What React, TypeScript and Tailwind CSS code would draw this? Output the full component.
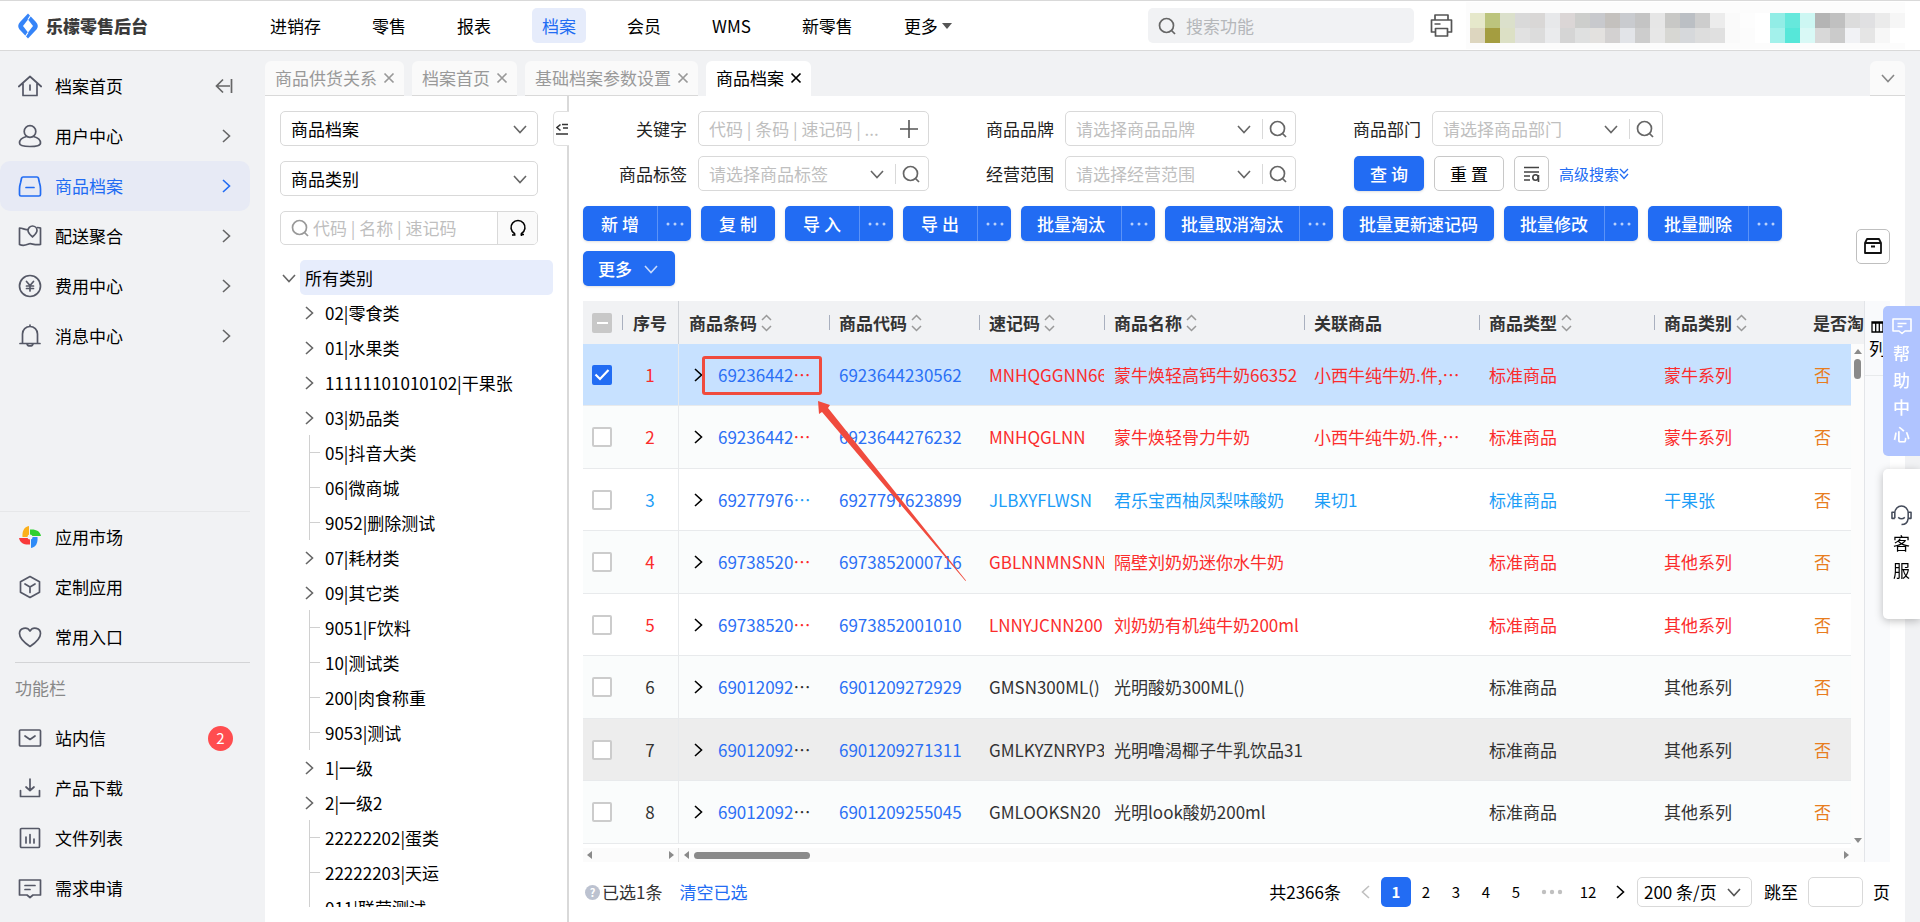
import { useState } from "react";
import type { ReactNode } from "react";

const navItems = ["进销存", "零售", "报表", "档案", "会员", "WMS", "新零售"];

const openTabs = ["商品供货关系", "档案首页", "基础档案参数设置", "商品档案"];

const treeItems = [
  { label: "02|零食类", leaf: false },
  { label: "01|水果类", leaf: false },
  { label: "11111101010102|干果张", leaf: false },
  { label: "03|奶品类", leaf: false },
  { label: "05|抖音大类", leaf: true },
  { label: "06|微商城", leaf: true },
  { label: "9052|删除测试", leaf: true },
  { label: "07|耗材类", leaf: false },
  { label: "09|其它类", leaf: false },
  { label: "9051|F饮料", leaf: true },
  { label: "10|测试类", leaf: true },
  { label: "200|肉食称重", leaf: true },
  { label: "9053|测试", leaf: true },
  { label: "1|一级", leaf: false },
  { label: "2|一级2", leaf: false },
  { label: "22222202|蛋类", leaf: true },
  { label: "22222203|天运", leaf: true },
  { label: "011|联营测试", leaf: true },
];

const toolbar = [
  { label: "新 增", more: true },
  { label: "复 制", more: false },
  { label: "导 入", more: true },
  { label: "导 出", more: true },
  { label: "批量淘汰", more: true },
  { label: "批量取消淘汰", more: true },
  { label: "批量更新速记码", more: false },
  { label: "批量修改", more: true },
  { label: "批量删除", more: true },
];

const columns = [
  { title: "商品条码", sort: true },
  { title: "商品代码", sort: true },
  { title: "速记码", sort: true },
  { title: "商品名称", sort: true },
  { title: "关联商品", sort: false },
  { title: "商品类型", sort: true },
  { title: "商品类别", sort: true },
  { title: "是否淘", sort: false },
];

const red = "text-[#fb2c2c]";
const sky = "text-[#1c9df7]";
const dark = "text-[#333333]";

const rows = [
  { code: "6923644230562", py: "MNHQGGNN66", name: "蒙牛焕轻高钙牛奶66352", link: "小西牛纯牛奶.件,…", cat: "蒙牛系列", color: red },
  { code: "6923644276232", py: "MNHQGLNN", name: "蒙牛焕轻骨力牛奶", link: "小西牛纯牛奶.件,…", cat: "蒙牛系列", color: red },
  { code: "6927797623899", py: "JLBXYFLWSN", name: "君乐宝西柚凤梨味酸奶", link: "果切1", cat: "干果张", color: sky },
  { code: "6973852000716", py: "GBLNNMNSNN", name: "隔壁刘奶奶迷你水牛奶", link: "", cat: "其他系列", color: red },
  { code: "6973852001010", py: "LNNYJCNN200", name: "刘奶奶有机纯牛奶200ml", link: "", cat: "其他系列", color: red },
  { code: "6901209272929", py: "GMSN300ML()", name: "光明酸奶300ML()", link: "", cat: "其他系列", color: dark },
  { code: "6901209271311", py: "GMLKYZNRYP3", name: "光明噜渴椰子牛乳饮品31", link: "", cat: "其他系列", color: dark },
  { code: "6901209255045", py: "GMLOOKSN20", name: "光明look酸奶200ml", link: "", cat: "其他系列", color: dark },
];

// user area is masked, one colour per block
const mask = [
  ["#e6e8cb", "#bcc47d", "#dbe0cb", "#d9d9d9", "#d9d7d6", "#e7e8ea", "#dbd6d6", "#cdcecc", "#c8c9cd", "#c4c1be", "#c9cbcf", "#c4c4c4", "#e6e6e6", "#c8c8c6", "#bbbfc4", "#cdcdcd", "#ececec", "#fafafa", "#fdfdfd", "#ffffff", "#92ede6", "#66e8dc", "#cdf7f3", "#b4b4b4", "#c0c0c0", "#dcdcdc", "#e0e0e2", "#ebebeb", "#f6f6f6"],
  ["#ddd6bf", "#a49d40", "#dce0c5", "#e1e1e1", "#dcdcdc", "#eaebed", "#d5d5d5", "#dfe0e0", "#e3e1df", "#d3d1d1", "#e2e4e8", "#cdcdcd", "#e7e7e7", "#d7d7d3", "#d6d8db", "#dddddd", "#e0e0e0", "#fafafa", "#fcfcfc", "#ffffff", "#a3f1eb", "#56e7d9", "#d9f9f6", "#d8d8d8", "#cbcbcb", "#f1f2f5", "#e5e5e5", "#f7f7f7", "#ffffff"],
];

const Chevron = ({ className = "" }: { className?: string }) => (
  <svg viewBox="0 0 14 14" className={`size-[14px] shrink-0 ${className}`} fill="none" stroke="currentColor" strokeWidth="1.6">
    <path d="M1 4l6 6.5L13 4" />
  </svg>
);

const Close = () => (
  <svg viewBox="0 0 12 12" className="size-3 shrink-0" fill="none" stroke="currentColor" strokeWidth="1.7">
    <path d="M1.5 1.5l9 9M10.5 1.5l-9 9" />
  </svg>
);

const Search = ({ className = "" }: { className?: string }) => (
  <svg viewBox="0 0 18 18" className={`size-[18px] shrink-0 ${className}`} fill="none" stroke="currentColor" strokeWidth="1.7">
    <circle cx="8.5" cy="8.5" r="7" />
    <path d="M13.5 13.5l3.5 3.5" />
  </svg>
);

const Dots = () => (
  <svg viewBox="0 0 18 4" className="h-1 w-[18px]" fill="currentColor">
    <circle cx="2" cy="2" r="1.5" />
    <circle cx="9" cy="2" r="1.5" />
    <circle cx="16" cy="2" r="1.5" />
  </svg>
);

const Sorter = () => (
  <svg viewBox="0 0 11 18" className="h-[18px] w-[11px] shrink-0" fill="none" stroke="#999999" strokeWidth="1.5">
    <path d="M1 6l4.500-4.500L10 6M1 12l4.500 4.500L10 12" />
  </svg>
);

const SideIcon = ({ children }: { children: ReactNode }) => (
  <svg viewBox="0 0 24 24" className="size-6 shrink-0" fill="none" stroke="currentColor" strokeWidth="1.7" strokeLinejoin="round" strokeLinecap="round">
    {children}
  </svg>
);

const topMenu = [
  { label: "档案首页", icon: <path d="M.8 12.500L12 2.500l11.200 10M5 9.500V21.500h14V9.500M12 11v5" /> },
  { label: "用户中心", icon: <><circle cx="12" cy="7.500" r="5.800" /><path d="M8.500 12.500C4.500 13.500 1.500 16 1.500 19c0 2.500 4 3.500 10.500 3.500s10.500-1 10.500-3.500c0-3-3-5.500-7-6.500" /></> },
  { label: "商品档案", icon: <><path d="M5 3h14c.8 0 1.200.3 1.400 1l1 4.500c.8 2.500 1.100 4 1.100 6.500v5.500c0 1-.5 1.500-1.500 1.500H3c-1 0-1.500-.5-1.500-1.500V15c0-2.500.3-4 1.100-6.500l1-4.500c.2-.7.600-1 1.400-1z" /><path d="M8 13.500h8" /></> },
  { label: "配送聚合", icon: <><path d="M9.500 5.500C6.500 6 5 4 1.500 4V20.500c4 2 6 .8 9-.5s5 1.500 12 .5V4c-1-.5-2-.5-3-.5" /><path d="M14.500 13c-2.500-2.500-4.500-4-4.500-6.500a4.500 4.500 0 0 1 9 0c0 2.500-2 4-4.500 6.500z" /></> },
  { label: "费用中心", icon: <><circle cx="12" cy="12" r="10.500" /><path d="M8.500 7.500l3.500 4 3.500-4M8.500 12h7M8.500 14.500h7M12 11.500V17" /></> },
  { label: "消息中心", icon: <><path d="M2 19.500h20M4.500 19.500V10a7.500 7.500 0 0 1 15 0v9.500M12 2.500V1M9 20c.5 2.500 5.500 2.500 6 0" /></> },
];

const appMenu = [
  {
    label: "应用市场",
    icon: (
      <g stroke="none">
        <path d="M11 1v11H4.500C4 6 6 2 11 1z" fill="#fbb01c" />
        <path d="M23 11H12V4.500C18 4 22 6 23 11z" fill="#2fd02f" />
        <path d="M13 23V12h6.500C20 18 18 22 13 23z" fill="#2e8bf7" />
        <path d="M1 13h11v6.500C6 20 2 18 1 13z" fill="#f93a3a" />
        <circle cx="12" cy="12" r="2.500" fill="#f1f2f4" />
      </g>
    ),
  },
  { label: "定制应用", icon: <path d="M12 1.500l9.500 5.250v10.500L12 22.500l-9.500-5.250V6.750zM7 9l5 3 5-3M12 12v5.500" /> },
  { label: "常用入口", icon: <path d="M12 21.500C6 17.500 1.500 13.500 1.500 8.500c0-5.500 7.500-7.500 10.500-2.500 3-5 10.500-3 10.500 2.500 0 5-4.500 9-10.500 13z" /> },
];

const toolMenu = [
  { label: "站内信", badge: "2", icon: <><rect x="1.500" y="4" width="21" height="16" rx="1" /><path d="M7 10l5 3.500 5-3.500" /></> },
  { label: "产品下载", icon: <path d="M12 3v11M8 11l4 3.500 4-3.500M2.500 14.500V20.500h19v-6" /> },
  { label: "文件列表", icon: <><rect x="2.500" y="2.500" width="19" height="19" rx="1" /><path d="M8 11v6M12 8.500V17M16 13v4" /></> },
  { label: "需求申请", icon: <path d="M1.500 4h21v15H15l-3 2.500L9 19H1.500zM7 9.500h10M7 13.500h5" /> },
];

const MenuRow = ({ label, icon, active, badge, tail }: { label: string; icon: ReactNode; active?: boolean; badge?: string; tail?: ReactNode }) => (
  <a
    href="#"
    className={`flex h-[50px] items-center rounded-[10px] pl-[18px] pr-[17px] ${active ? "bg-[#e7eaf5] text-[#226cf3]" : "text-black"}`}
  >
    <span className={active ? "" : "text-[#555866]"}>
      <SideIcon>{icon}</SideIcon>
    </span>
    <span className="ml-[13px] flex-1">{label}</span>
    {badge && (
      <span className="flex size-[25px] items-center justify-center rounded-full bg-[#ff4d4f] text-[15px] text-white">{badge}</span>
    )}
    {tail}
  </a>
);

const PickField = ({ label, id }: { label: string; id: string }) => (
  <div className="flex items-center gap-[11px]">
    <label htmlFor={id} className="w-[104px] text-right text-[#222222]">{label}</label>
    <div className="flex h-[35px] flex-1 items-center rounded-[5px] border border-[#d9d9d9] bg-white text-[#666666]">
      <select id={id} className="h-full min-w-0 flex-1 appearance-none pl-[10px] text-[#bfbfbf] outline-none">
        <option>请选择{label}</option>
      </select>
      <Chevron />
      <span className="ml-[11px] h-5 w-px bg-[#d9d9d9]" />
      <button aria-label={`搜索${label}`} className="flex w-8 items-center pl-[6px]">
        <Search />
      </button>
    </div>
  </div>
);

const blueBtn = "flex h-[35px] items-center justify-center bg-[#226cf3] font-medium text-white";

function App() {
  const [tab, setTab] = useState("商品档案");
  const [checked, setChecked] = useState([0]);

  const toggle = (i: number) =>
    setChecked(checked.includes(i) ? checked.filter((c) => c !== i) : [...checked, i]);

  return (
    <div lang="zh-CN" className="flex h-screen flex-col overflow-hidden bg-[#f1f2f4] font-['Noto_Sans_CJK_SC',sans-serif] text-[17px] leading-6 text-black">
      <header className="flex h-[51px] shrink-0 items-center border-y border-[#d9d9d9] bg-white pr-[15px]">
        <div className="flex w-[260px] items-center gap-2 pl-[18px]">
          <svg viewBox="0 0 20 26" className="h-[26px] w-5">
            <path d="M10 .5L17.500 8.500c3 3 3 6 0 9L10 25.500 2.500 17.500c-3-3-3-6 0-9z" fill="#3584f8" />
            <path d="M10 6.500l5 6.500-5 6.500L5 13z" fill="#ffffff" />
            <path d="M10 6.500L13 2M10 19.500L7 24" stroke="#ffffff" strokeWidth="1.2" />
          </svg>
          <h1 className="text-[17px] font-black text-[#3a3a3a]">乐檬零售后台</h1>
        </div>
        <nav className="flex items-center gap-[31px]">
          {navItems.map((item) => (
            <a
              key={item}
              href="#"
              className={`flex h-[35px] items-center rounded-[5px] px-[10px] ${item === "档案" ? "bg-[#e6ecfb] text-[#226cf3]" : ""}`}
            >
              {item}
            </a>
          ))}
          <button className="flex h-[35px] items-center gap-1 px-[10px]">
            更多
            <svg viewBox="0 0 10 6" className="h-[6px] w-[10px]" fill="#555555"><path d="M0 0h10L5 6z" /></svg>
          </button>
        </nav>
        <div className="ml-auto flex h-[35px] w-[266px] items-center gap-[10px] rounded-[5px] bg-[#f1f2f4] pl-[10px] text-[#666666]">
          <Search />
          <input aria-label="搜索功能" placeholder="搜索功能" className="min-w-0 flex-1 bg-transparent outline-none placeholder:text-[#b5b7ba]" />
        </div>
        <button aria-label="打印" className="ml-4 mr-[13px] text-[#555555]">
          <svg viewBox="0 0 23 23" className="size-[23px]" fill="none" stroke="currentColor" strokeWidth="1.7" strokeLinejoin="round">
            <path d="M5 6V1h13v5M5 18H1.500V6h20v12H18M5.500 14.500h12V22h-12zM4.500 10h6" />
          </svg>
        </button>
        <svg viewBox="0 0 439 47" className="h-[47px] w-[439px]" shapeRendering="crispEdges">
          <rect width="439" height="47" fill="#fcfcfc" />
          {mask.map((line, y) =>
            line.map((c, x) => <rect key={`${x}-${y}`} x={4 + x * 15} y={11 + y * 15} width="15" height="15" fill={c} />)
          )}
        </svg>
      </header>

      <div className="flex min-h-0 flex-1">
        <aside className="flex w-[265px] shrink-0 flex-col pr-[15px] pt-[10px]">
          {topMenu.map((m, i) => (
            <MenuRow
              key={m.label}
              {...m}
              active={m.label === "商品档案"}
              tail={
                i === 0 ? (
                  <svg viewBox="0 0 18 16" className="h-4 w-[18px] text-[#666666]" fill="none" stroke="currentColor" strokeWidth="1.7">
                    <path d="M16.500 1v14M15 8H2M8 1.500L1.500 8 8 14.500" />
                  </svg>
                ) : (
                  <Chevron className={m.label === "商品档案" ? "-rotate-90" : "-rotate-90 text-[#666666]"} />
                )
              }
            />
          ))}
          <div className="mt-auto border-t border-[#e6e7e9] pb-[9px]">
            {appMenu.map((m) => <MenuRow key={m.label} {...m} />)}
            <h2 className="ml-[15px] flex h-[51px] items-center border-t border-[#d3d4d6] text-[#888888]">功能栏</h2>
            {toolMenu.map((m) => <MenuRow key={m.label} {...m} />)}
          </div>
        </aside>

        <div className="flex min-w-0 flex-1 flex-col">
          <div className="flex shrink-0 gap-2 pt-[10px]">
            {openTabs.map((t) => (
              <button
                key={t}
                onClick={() => setTab(t)}
                className={`flex h-[35px] items-center gap-[6px] rounded-t-[6px] border-b pl-[10px] pr-[9px] ${
                  t === tab ? "border-white bg-white text-black" : "border-[#d9d9d9] bg-[#fafafa] text-[#999999]"
                }`}
              >
                {t}
                <Close />
              </button>
            ))}
            <button aria-label="全部标签" className="ml-auto mr-[15px] flex h-[35px] w-[35px] items-center justify-center rounded-t-[6px] border-b border-[#d9d9d9] bg-[#fafafa] text-[#888888]">
              <Chevron />
            </button>
          </div>

          <div className="mr-[15px] flex min-h-0 flex-1 bg-white">
            {/* category tree */}
            <section className="relative w-[304px] shrink-0 border-r-2 border-[#d9d9d9] pb-[15px]">
              <div className="flex h-full flex-col">
                <div className="flex flex-col gap-[15px] pl-[15px] pr-[29px] pt-[15px]">
                  {["商品档案", "商品类别"].map((s) => (
                    <div key={s} className="flex h-[35px] items-center rounded-[5px] border border-[#d9d9d9] pr-[10px] text-[#666666]">
                      <select aria-label={s} className="h-full flex-1 appearance-none pl-[10px] text-black outline-none">
                        <option>{s}</option>
                      </select>
                      <Chevron />
                    </div>
                  ))}
                  <div className="flex h-[34px] items-center overflow-hidden rounded-[5px] border border-[#d9d9d9] pl-[10px] text-[#999999]">
                    <Search />
                    <input aria-label="搜索类别" placeholder="代码 | 名称 | 速记码" className="ml-1 min-w-0 flex-1 outline-none placeholder:text-[#bfbfbf]" />
                    <button aria-label="刷新" className="flex h-full w-10 items-center justify-center border-l border-[#d9d9d9] bg-[#fafafa] text-black">
                      <svg viewBox="0 0 18 18" className="size-[18px]" fill="none" stroke="currentColor" strokeWidth="1.6">
                        <path d="M5.500 16.500V14M5.500 14.500A7 7 0 1 1 12.500 14.500V17M3 16h3.500M11.500 15.500H15" />
                      </svg>
                    </button>
                  </div>
                </div>
                <div className="mt-[15px] min-h-0 flex-1 overflow-hidden pl-[17px] pr-[14px]">
                  <div className="flex h-[35px] items-center gap-1">
                    <Chevron className="text-[#666666]" />
                    <button className="h-full flex-1 rounded-[5px] bg-[#e7edfc] pl-[5px] text-left">所有类别</button>
                  </div>
                  <ul className="pl-5">
                    {treeItems.map((t) => (
                      <li key={t.label} className="flex h-[35px] items-center">
                        {t.leaf ? (
                          <span className="ml-[7px] flex h-full w-4 items-center border-l border-[#d0d0d0]">
                            <span className="h-px w-[10px] bg-[#d0d0d0]" />
                          </span>
                        ) : (
                          <Chevron className="mr-[9px] -rotate-90 text-[#666666]" />
                        )}
                        {t.label}
                      </li>
                    ))}
                  </ul>
                </div>
              </div>
              {/* collapse handle sits over the divider */}
              <button aria-label="收起" className="absolute -right-[2px] top-[15px] flex h-[35px] w-4 items-center justify-center rounded-l-[5px] border border-r-0 border-[#e0e0e0] bg-white">
                <svg viewBox="0 0 12 12" className="size-3" fill="none" stroke="#333333" strokeWidth="1.6">
                  <path d="M4.500 1.500L1 4.500l3.500 3M6 1.500h6M7 5h5M0 11h12" />
                </svg>
              </button>
            </section>

            <main className="flex min-w-0 flex-1 flex-col pl-[14px] pr-[15px] pt-[15px]">
              <form onSubmit={(e) => e.preventDefault()} className="grid shrink-0 grid-cols-[346px_346px_346px] gap-x-[21px] gap-y-[10px]">
                <div className="flex items-center gap-[11px]">
                  <label htmlFor="kw" className="w-[104px] text-right text-[#222222]">关键字</label>
                  <div className="flex h-[35px] flex-1 items-center rounded-[5px] border border-[#d9d9d9] pr-[10px]">
                    <input id="kw" placeholder="代码 | 条码 | 速记码 | ..." className="min-w-0 flex-1 pl-[10px] outline-none placeholder:text-[#bfbfbf]" />
                    <svg viewBox="0 0 18 18" className="size-[18px]" stroke="#555555" strokeWidth="1.6"><path d="M9 0v18M0 9h18" /></svg>
                  </div>
                </div>
                <PickField label="商品品牌" id="brand" />
                <PickField label="商品部门" id="dept" />
                <PickField label="商品标签" id="tag" />
                <PickField label="经营范围" id="scope" />
                <div className="flex items-center gap-[10px] whitespace-nowrap pl-[37px]">
                  <button className="h-[35px] w-[70px] rounded-[5px] bg-[#226cf3] font-medium text-white shadow-sm">查 询</button>
                  <button type="reset" className="h-[35px] w-[70px] rounded-[5px] border border-[#c8c8c8]">重 置</button>
                  <button aria-label="方案" className="flex h-[35px] w-[35px] items-center justify-center rounded-[5px] border border-[#c8c8c8]">
                    <svg viewBox="0 0 16 16" className="size-4" fill="none" stroke="#444444" strokeWidth="1.6">
                      <path d="M0 1.500h15M0 6h15M0 10h6M0 14h6M14.500 9v7" />
                      <circle cx="11.500" cy="11.500" r="2.700" />
                    </svg>
                  </button>
                  <a href="#" className="flex items-center text-[15px] text-[#226cf3]">
                    高级搜索
                    <svg viewBox="0 0 10 12" className="h-3 w-[10px]" fill="none" stroke="currentColor" strokeWidth="1.3">
                      <path d="M1 1l4 4 4-4M1 6l4 4.500L9 6" />
                    </svg>
                  </a>
                </div>
              </form>

              <div className="mt-[15px] flex shrink-0 items-center justify-between">
                <div className="flex flex-wrap gap-[10px]">
                  {toolbar.map((b) => (
                    <div key={b.label} className="flex rounded-[5px] shadow-sm">
                      <button className={`${blueBtn} min-w-[74px] px-4 ${b.more ? "rounded-l-[5px]" : "rounded-[5px]"}`}>{b.label}</button>
                      {b.more && (
                        <button aria-label={`${b.label}更多`} className="flex h-[35px] w-[34px] items-center justify-center rounded-r-[5px] border-l border-[#5b93f7] bg-[#226cf3] text-[#b9d0fb]">
                          <Dots />
                        </button>
                      )}
                    </div>
                  ))}
                  <button className={`${blueBtn} gap-3 rounded-[5px] pl-[15px] pr-[17px] shadow-sm`}>
                    更多
                    <Chevron className="text-[#c8dafc]" />
                  </button>
                </div>
                <button aria-label="归档" className="flex h-[35px] w-[34px] shrink-0 items-center justify-center rounded-[5px] border border-[#bfbfbf]">
                  <svg viewBox="0 0 18 16" className="h-4 w-[18px]" fill="none" stroke="#111111" strokeWidth="1.8" strokeLinejoin="round">
                    <path d="M1 5L3 1h12l2 4v10H1zM1 5h16M7 8.500h4" />
                  </svg>
                </button>
              </div>

              <div className="mt-[15px] flex min-h-0 flex-1">
                <div className="flex min-w-0 flex-1 flex-col">
                  <div className="relative min-h-0 flex-1 overflow-hidden">
                    <table className="w-full table-fixed border-separate border-spacing-0 whitespace-nowrap text-left">
                      <colgroup>
                        <col className="w-[39px]" />
                        <col className="w-[57px]" />
                        <col className="w-[150px]" />
                        <col className="w-[150px]" />
                        <col className="w-[125px]" />
                        <col className="w-[200px]" />
                        <col className="w-[175px]" />
                        <col className="w-[175px]" />
                        <col className="w-[150px]" />
                        <col />
                      </colgroup>
                      <thead>
                        <tr className="h-[43px] bg-[#f1f2f4] text-[#333333]">
                          <th className="pl-[9px]">
                            <button aria-label="全选" className="flex size-5 items-center justify-center rounded-[2px] bg-[#c8c8c8]">
                              <span className="h-[2px] w-[11px] bg-white" />
                            </button>
                          </th>
                          <th className="border-r border-[#d0d3d8] font-bold">
                            <span className="flex items-center gap-[10px]">
                              <i className="h-[15px] w-px bg-[#a9b0bf]" />
                              序号
                            </span>
                          </th>
                          {columns.map((c, i) => (
                            <th key={c.title} className="overflow-hidden font-bold">
                              <span className="flex items-center">
                                {i > 0 && <i className="h-[15px] w-px bg-[#a9b0bf]" />}
                                <span className={i > 0 ? "ml-[9px] mr-1" : "ml-[10px] mr-1"}>{c.title}</span>
                                {c.sort && <Sorter />}
                              </span>
                            </th>
                          ))}
                        </tr>
                      </thead>
                      <tbody className="[&_td]:border-b [&_td]:border-[#e8eaec]">
                        {rows.map((r, i) => (
                          <tr
                            key={r.code}
                            className={`h-[62px] even:h-[63px] ${r.color} ${
                              checked.includes(i) ? "bg-[#c7e1ff]" : i === 6 ? "bg-[#ededed]" : i % 2 ? "bg-[#fafcfc]" : "bg-white"
                            }`}
                          >
                            <td className="pl-[9px]">
                              <span className="relative block size-5">
                                <input
                                  type="checkbox"
                                  aria-label={`选择第${i + 1}行`}
                                  checked={checked.includes(i)}
                                  onChange={() => toggle(i)}
                                  className="block size-5 appearance-none rounded-[2px] border-2 border-[#cccccc] bg-white checked:border-[#226cf3] checked:bg-[#226cf3]"
                                />
                                {checked.includes(i) && (
                                  <svg viewBox="0 0 20 20" className="pointer-events-none absolute inset-0" fill="none" stroke="#ffffff" strokeWidth="2.2">
                                    <path d="M3.500 9.500l4.500 4.500 8.500-9" />
                                  </svg>
                                )}
                              </span>
                            </td>
                            <td className="border-r text-center">{i + 1}</td>
                            <td className="pr-[11px]">
                              <div className="flex items-center">
                                <button aria-label="展开" className="w-[39px] pl-3 text-black">
                                  <Chevron className="-rotate-90" />
                                </button>
                                <div className="min-w-0 flex-1 truncate">
                                  <a href="#" className="text-[#2b70f5]">{r.code}</a>
                                </div>
                              </div>
                            </td>
                            <td className="pl-[10px]">
                              <a href="#" className="text-[#2b70f5]">{r.code}</a>
                            </td>
                            <td className="overflow-hidden pl-[10px]">{r.py}</td>
                            <td className="overflow-hidden pl-[10px]">{r.name}</td>
                            <td className="pl-[10px]">{r.link}</td>
                            <td className="pl-[10px]">标准商品</td>
                            <td className="pl-[10px]">{r.cat}</td>
                            <td className="pl-[10px] text-[#e87d1e]">否</td>
                          </tr>
                        ))}
                      </tbody>
                    </table>
                    {/* vertical scrollbar */}
                    <div className="absolute bottom-0 right-0 top-[43px] flex w-[13px] flex-col items-center bg-[#fcfcfc] py-[5px]">
                      <svg viewBox="0 0 8 5" className="h-[5px] w-2" fill="#8a8a8a"><path d="M0 5L4 0l4 5z" /></svg>
                      <span className="mt-[5px] h-5 w-[7px] rounded-full bg-[#8a8a8a]" />
                      <svg viewBox="0 0 8 5" className="mt-auto h-[5px] w-2" fill="#8a8a8a"><path d="M0 0h8L4 5z" /></svg>
                    </div>
                    {/* marked barcode and its arrow */}
                    <div className="pointer-events-none absolute left-[119px] top-[55px] h-[39px] w-[120px] rounded-[3px] border-[3px] border-[#f04b3e]" />
                    <svg viewBox="0 0 150 182" className="pointer-events-none absolute left-[234px] top-[99px] h-[182px] w-[150px]" fill="#f04b3e">
                      <path d="M1 1l12 4-2 3L149 180.500l-.5.5L5 12l-3 2z" />
                    </svg>
                  </div>
                  {/* horizontal scrollbars */}
                  <div className="flex h-[14px] shrink-0 items-center bg-[#fbfbfb]">
                    <div className="flex h-full w-24 items-center justify-between border-r border-[#e0e0e0] px-1">
                      <svg viewBox="0 0 5 8" className="h-2 w-[5px]" fill="#8a8a8a"><path d="M5 0v8L0 4z" /></svg>
                      <svg viewBox="0 0 5 8" className="h-2 w-[5px]" fill="#8a8a8a"><path d="M0 0v8l5-4z" /></svg>
                    </div>
                    <div className="flex flex-1 items-center pl-[5px] pr-[15px]">
                      <svg viewBox="0 0 5 8" className="h-2 w-[5px]" fill="#8a8a8a"><path d="M5 0v8L0 4z" /></svg>
                      <span className="ml-[5px] h-[7px] w-[116px] rounded-full bg-[#8a8a8a]" />
                      <svg viewBox="0 0 5 8" className="ml-auto h-2 w-[5px]" fill="#8a8a8a"><path d="M0 0v8l5-4z" /></svg>
                    </div>
                  </div>
                </div>
                <div className="w-[26px] shrink-0 border-l border-[#e3e5e9] bg-[#f9fafc]">
                  <button aria-label="列设置" className="flex h-[75px] w-full flex-col items-center gap-[3px] border-b border-[#e8eaec] pt-5">
                    <svg viewBox="0 0 13 12" className="h-3 w-[13px]" fill="none" stroke="#000000" strokeWidth="1.3">
                      <path d="M1 1h11v10H1zM1 2h11M4.700 1v10M8.300 1v10" />
                    </svg>
                    列
                  </button>
                </div>
              </div>

              <footer className="flex h-[60px] shrink-0 items-center whitespace-nowrap">
                <span className="ml-[2px] flex size-[15px] items-center justify-center rounded-full bg-[#bcc2d0] text-[11px] font-bold leading-none text-white">?</span>
                <span className="ml-[2px] text-[#333333]">已选1条</span>
                <button onClick={() => setChecked([])} className="ml-[17px] text-[#226cf3]">清空已选</button>
                <span className="ml-auto">共2366条</span>
                <nav className="ml-[10px] flex items-center text-[15px]">
                  <button aria-label="上一页" className="flex w-[30px] justify-center text-[#c0c0c0]"><Chevron className="rotate-90" /></button>
                  {["1", "2", "3", "4", "5"].map((p) => (
                    <button key={p} className={`size-[30px] rounded-[5px] ${p === "1" ? "bg-[#226cf3] font-bold text-white" : ""}`}>{p}</button>
                  ))}
                  <span className="flex w-[42px] justify-center text-[#c0c0c0]">
                    <svg viewBox="0 0 22 6" className="h-[6px] w-[22px]" fill="currentColor">
                      <circle cx="3" cy="3" r="2.2" />
                      <circle cx="11" cy="3" r="2.2" />
                      <circle cx="19" cy="3" r="2.2" />
                    </svg>
                  </span>
                  <button className="size-[30px]">12</button>
                  <button aria-label="下一页" className="flex w-[34px] justify-center"><Chevron className="-rotate-90" /></button>
                </nav>
                <div className="flex h-[30px] w-[115px] items-center rounded-[5px] border border-[#d9d9d9] pr-[10px] text-[#555555]">
                  <select aria-label="每页条数" className="min-w-0 flex-1 appearance-none pl-[6px] text-black outline-none">
                    <option>200 条/页</option>
                  </select>
                  <Chevron />
                </div>
                <label htmlFor="jump" className="ml-3">跳至</label>
                <input id="jump" className="mx-[10px] h-[30px] w-[55px] rounded-[5px] border border-[#d9d9d9] px-2" />
                <span>页</span>
              </footer>
            </main>
          </div>
        </div>
      </div>

      {/* floating side buttons */}
      <div className="fixed right-0 top-[306px] flex w-[37px] flex-col gap-[13px]">
        <button className="flex h-[150px] flex-col items-center rounded-l-[5px] bg-[#b0c4ff] pt-[11px] font-medium leading-[27px] text-white">
          <svg viewBox="0 0 20 18" className="mb-1 h-[18px] w-5 shrink-0" fill="none" stroke="currentColor" strokeWidth="1.6" strokeLinejoin="round">
            <path d="M1 2h18v12h-6l-3 2.500L7 14H1zM5.500 6.500h9M5.500 9.500h5" />
          </svg>
          {["帮", "助", "中", "心"].map((c) => <span key={c}>{c}</span>)}
        </button>
        <button className="flex h-[150px] flex-col items-center rounded-l-[5px] bg-white pt-9 leading-[27px] shadow-[0_2px_8px_rgba(0,0,0,0.25)]">
          <svg viewBox="0 0 22 22" className="mb-[3px] size-[21px] shrink-0" fill="none" stroke="#444b5a" strokeWidth="1.6" strokeLinejoin="round">
            <path d="M4 14V8.500a7 7.500 0 0 1 14 0V14M4 7.500H1V14h3M18 7.500h3V14h-3M18 14c-.5 4-3 6.500-7 6.500M7.500 13c2 1.700 5 1.700 7 0" />
          </svg>
          {["客", "服"].map((c) => <span key={c}>{c}</span>)}
        </button>
      </div>
    </div>
  );
}

export default App;
